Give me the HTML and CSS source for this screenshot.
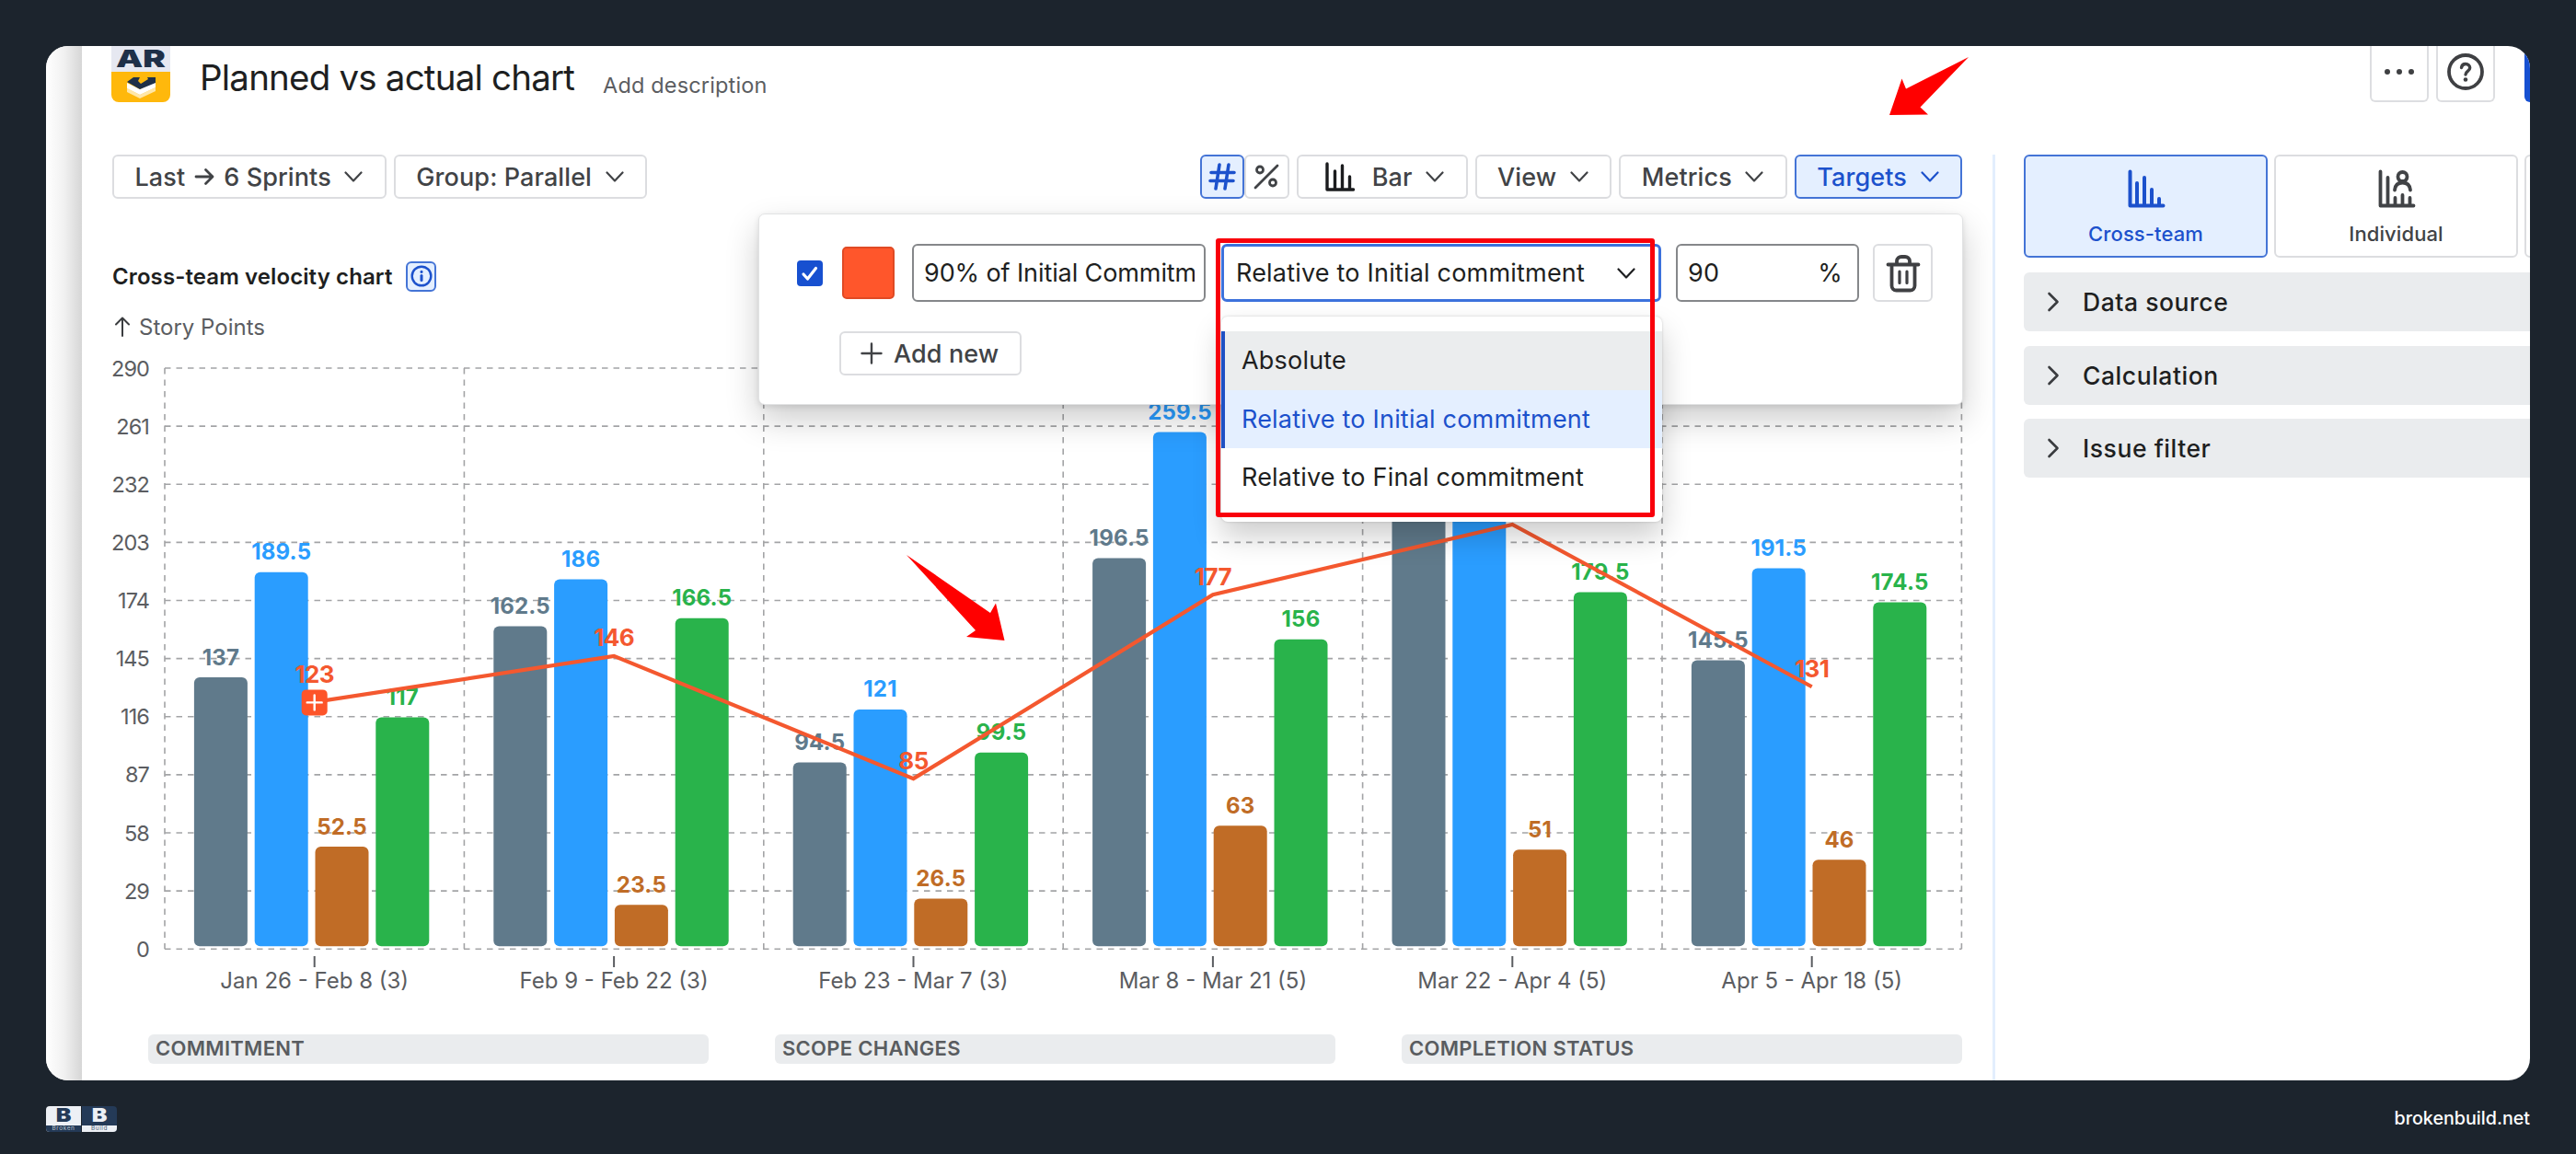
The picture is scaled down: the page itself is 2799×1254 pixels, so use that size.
FILE: index.html
```html
<!DOCTYPE html>
<html lang="en">
<head>
    <meta charset="UTF-8">
    <meta name="viewport" content="width=device-width, initial-scale=1.0">
    <title>Planned vs actual chart</title>
    <link rel="stylesheet" href="styles.css">
</head>
<body>
    <svg class="defs" width="0" height="0">
        <symbol id="chevron" viewBox="0 0 20 20"><path d="M1.5 5.5 10 14.5 18.5 5.5" fill="none" stroke="currentColor" stroke-width="2.2" stroke-linecap="round" stroke-linejoin="round"/></symbol>
        <symbol id="chevron-right" viewBox="0 0 14 22"><path d="M2.5 2 11.5 11 2.5 20" fill="none" stroke="currentColor" stroke-width="2.6" stroke-linecap="round" stroke-linejoin="round"/></symbol>
    </svg>

    <div class="window">
        <div class="edge"></div>
        <div class="app">
            <header class="header">
                <svg class="app-logo" viewBox="0 0 64 61">
                    <path d="M0 0h64v28H0z" fill="#e6e8f1"/>
                    <path d="M0 28h64v25a8 8 0 0 1-8 8H8a8 8 0 0 1-8-8z" fill="#ffb80c"/>
                    <text x="32" y="22.5" text-anchor="middle" textLength="54" lengthAdjust="spacingAndGlyphs" class="logo-text">AR</text>
                    <path d="M17 46l14 7 17-8v4L31 57 17 50z" fill="#ffe7a8"/>
                    <path d="M17 40l14 7 17-9v7L31 53 17 46z" fill="#fff"/>
                    <path d="M17 39l7-5h7l-2 4 3 3 8-5-1-2h9v6L31 47z" fill="#1f3048"/>
                </svg>
                <h1 class="title">Planned vs actual chart</h1>
                <span class="description">Add description</span>
                <div class="header-actions">
                    <button class="header-btn">
                        <svg width="32" height="8" viewBox="0 0 32 8"><circle cx="3" cy="4" r="3"/><circle cx="16" cy="4" r="3"/><circle cx="29" cy="4" r="3"/></svg>
                    </button>
                    <button class="header-btn">
                        <svg width="42" height="42" viewBox="0 0 42 42"><circle cx="21" cy="21" r="18" fill="none" stroke="currentColor" stroke-width="3.8"/><path d="M16.500 16.500c.5-3 2.300-4 4.500-4 2.800 0 4.700 1.700 4.700 4.200 0 3.600-4.700 3.800-4.700 7.300" fill="none" stroke="currentColor" stroke-width="3.4" stroke-linecap="round"/><circle cx="21" cy="29.500" r="2.300"/></svg>
                    </button>
                    <span class="save-btn"></span>
                </div>
            </header>

            <div class="columns">
                <main class="content">
                    <div class="toolbar">
                        <button class="btn">Last <svg class="arrow" viewBox="0 0 22 20"><path d="M2 10h18M12.500 2.500 20 10l-7.500 7.500"/></svg> 6 Sprints <svg class="chev"><use href="#chevron"/></svg></button>
                        <button class="btn">Group: Parallel <svg class="chev"><use href="#chevron"/></svg></button>
                        <div class="toolbar-right">
                            <div class="toggle">
                                <button class="btn icon-btn active"><svg width="30" height="30" viewBox="0 0 30 30"><path d="M12 2 8 28M22 2l-4 26M3 10.500h25M2 19.500h25" stroke-width="3.600"/></svg></button>
                                <button class="btn icon-btn"><svg width="28" height="28" viewBox="0 0 28 28"><path d="M26 2 2 26" stroke-width="2.800"/><circle cx="7" cy="6.500" r="3.500" stroke-width="2.800"/><circle cx="21" cy="20.500" r="3.500" stroke-width="2.800"/></svg></button>
                            </div>
                            <button class="btn bar-btn"><svg class="bar-icon" viewBox="0 0 32 32"><path d="M2 2v28h28.500M10.500 10v20M18.500 4v26M26.500 16v14" stroke-width="3.400"/></svg>Bar <svg class="chev"><use href="#chevron"/></svg></button>
                            <button class="btn">View <svg class="chev"><use href="#chevron"/></svg></button>
                            <button class="btn">Metrics <svg class="chev"><use href="#chevron"/></svg></button>
                            <button class="btn active">Targets <svg class="chev"><use href="#chevron"/></svg></button>
                        </div>
                    </div>

                    <div class="caption">
                        <h2>Cross-team velocity chart</h2>
                        <span class="info"><svg width="24" height="24" viewBox="0 0 24 24"><circle cx="12" cy="12" r="10.300" stroke-width="2.400"/><path d="M12 11.500v5" stroke-width="3"/><path d="M12 7.200v.2" stroke-width="3"/></svg></span>
                    </div>
                    <div class="unit"><svg width="18" height="22" viewBox="0 0 18 22"><path d="M9 21V1.500M2 8.500l7-7 7 7"/></svg>Story Points</div>

                    <svg id="chart" class="chart" viewBox="0 0 2044 729"></svg>

                    <div class="legend">
                        <div>COMMITMENT</div>
                        <div>SCOPE CHANGES</div>
                        <div>COMPLETION STATUS</div>
                    </div>

                    <section class="popover">
                        <div class="target-row">
                            <span class="checkbox"><svg width="20" height="20" viewBox="0 0 20 20"><path d="M3 11l4.500 5L16.500 4.500"/></svg></span>
                            <span class="swatch"></span>
                            <div class="field name"><span>90% of Initial Commitment</span></div>
                            <div class="select">
                                <span>Relative to Initial commitment</span>
                                <svg class="chev"><use href="#chevron"/></svg>
                                <ul class="menu">
                                    <li class="hovered">Absolute</li>
                                    <li class="selected">Relative to Initial commitment</li>
                                    <li>Relative to Final commitment</li>
                                </ul>
                            </div>
                            <div class="field value"><span>90</span><span>%</span></div>
                            <button class="trash"><svg width="38" height="42" viewBox="0 0 38 42"><path d="M2.500 11.500h33M12 11V7.500A5 5 0 0 1 17 3h4a5 5 0 0 1 5 4.500V11M6.500 12v22.500a5 5 0 0 0 5 5h15a5 5 0 0 0 5-5V12" stroke-width="3.800"/><path d="M15 19v12.500M23 19v12.500" stroke-width="3.200"/></svg></button>
                        </div>
                        <button class="btn add-btn"><svg width="24" height="24" viewBox="0 0 24 24"><path d="M12 1.500v21M1.500 12h21" stroke-width="2.400"/></svg>Add new</button>
                    </section>

                    <div class="highlight"></div>
                    <svg class="pointer pointer-targets" viewBox="0 0 86 63"><path d="M86 0 33.500 54.500 42 62.500 0 63 13.500 23.500 18 34.500z"/></svg>
                    <svg class="pointer pointer-line" viewBox="0 0 107 93"><path d="M0 0 91 63 97 52.500 106.500 93 65 89 75 82z"/></svg>
                </main>

                <aside class="panel">
                    <div class="tabs">
                        <div class="tab active"><svg width="42" height="42" viewBox="0 0 42 42"><path d="M3.500 2.500v37h36M11 15v24.500M19 9v30.500M27 22v17.500M35 32v7.500" stroke-width="4"/></svg>Cross-team</div>
                        <div class="tab"><svg width="42" height="42" viewBox="0 0 42 42"><path d="M3.500 2.500v37h36M11.500 9v30.500M19.500 31v8.500M27.500 28v11.500M35.500 31v8.500" stroke-width="3.800"/><circle cx="27.500" cy="8" r="5" stroke-width="3.800"/><path d="M19 22.500c.5-5 3.500-8 8.500-8s8 3 8.500 8" stroke-width="3.800"/></svg>Individual</div>
                        <div class="tab"></div>
                    </div>
                    <div class="accordion"><svg><use href="#chevron-right"/></svg>Data source</div>
                    <div class="accordion"><svg><use href="#chevron-right"/></svg>Calculation</div>
                    <div class="accordion"><svg><use href="#chevron-right"/></svg>Issue filter</div>
                </aside>
            </div>
        </div>
    </div>

    <footer class="footer">
        <div class="brand">
            <div class="brand-half"><b>B</b><small>Broken</small></div>
            <div class="brand-half dark"><b>B</b><small>Build</small></div>
        </div>
        <span class="site">brokenbuild.net</span>
    </footer>

    <script src="chart.js"></script>
</body>
</html>
```
FILE: styles.css
```css
* {
    box-sizing: border-box;
}
body {
    margin: 0;
    padding: 50px 50px 0;
    height: 1254px;
    overflow: hidden;
    background-color: #1c242d;
    font-family: Inter, sans-serif;
    color: #1e1f21;
}
h1, h2, ul {
    margin: 0;
    padding: 0;
}
button {
    font-family: inherit;
    margin: 0;
}
.defs {
    position: absolute;
}
svg path, svg circle {
    stroke-linecap: round;
    stroke-linejoin: round;
}
.window {
    display: flex;
    height: 1124px;
    border-radius: 24px;
    background-color: #fff;
    overflow: hidden;
}
.edge {
    flex: none;
    width: 39px;
    background: linear-gradient(to right, #fff, #f1f1f1 50%, #d6d6d6);
}
.app {
    flex: 1;
    min-width: 0;
}

/* header */
.header {
    display: flex;
    align-items: flex-start;
    height: 118px;
    padding-left: 32px;
}
.app-logo {
    width: 64px;
    height: 61px;
}
.logo-text {
    font-size: 26px;
    font-weight: 900;
    fill: #1f3048;
}
.title {
    margin-left: 32px;
    font-size: 38.5px;
    font-weight: 400;
    line-height: 69px;
    letter-spacing: -0.8px;
    white-space: nowrap;
}
.description {
    margin-left: 31px;
    font-size: 23.5px;
    line-height: 85px;
    letter-spacing: 0.15px;
    color: #5b5d61;
}
.header-actions {
    display: flex;
    margin-left: auto;
}
.header-btn {
    display: flex;
    align-items: center;
    justify-content: center;
    width: 64px;
    height: 61px;
    margin-right: 8px;
    padding: 0 0 3px;
    border: 2px solid #dddee1;
    border-top: none;
    border-radius: 0 0 6px 6px;
    background: #fff;
    color: #3f4043;
    fill: currentColor;
}
.save-btn {
    width: 6px;
    height: 61px;
    margin-left: 24px;
    border-bottom-left-radius: 6px;
    background-color: #1650d2;
}

.columns {
    display: flex;
    padding-left: 33px;
}
.content {
    position: relative;
    flex: none;
    width: 2010px;
}

/* toolbar */
.toolbar {
    display: flex;
    gap: 8px;
}
.toolbar-right {
    display: flex;
    gap: 8px;
    margin-left: auto;
}
.toggle {
    display: flex;
    gap: 0;
}
.btn {
    display: flex;
    align-items: center;
    height: 48px;
    padding: 0 23.5px 0 22.5px;
    border: 2px solid #dcdde0;
    border-radius: 6px;
    background-color: #fff;
    font-size: 27px;
    font-weight: 500;
    letter-spacing: 0.1px;
    white-space: nowrap;
    color: #414346;
}
.btn.active {
    border-color: #4474d6;
    background-color: #e4efff;
    color: #1c51cc;
}
.btn path, .btn circle {
    fill: none;
    stroke: currentColor;
}
.icon-btn {
    justify-content: center;
    width: 48.5px;
    padding: 0;
}
.chev {
    flex: none;
    width: 20px;
    height: 20px;
    margin-left: 14.5px;
}
.arrow {
    width: 22px;
    height: 20px;
    margin: 0 10px;
    stroke-width: 2.8;
}
.bar-btn {
    padding-left: 29px;
}
.bar-icon {
    width: 32px;
    height: 32px;
    margin-right: 19px;
    color: #1b1c1e;
}

/* chart */
.caption {
    display: flex;
    align-items: center;
    gap: 15px;
    height: 32px;
    margin-top: 68px;
}
.caption h2 {
    font-size: 24px;
    font-weight: 600;
    letter-spacing: 0.1px;
}
.info {
    display: flex;
    align-items: center;
    justify-content: center;
    width: 33px;
    height: 33px;
    border: 2px solid #4474d6;
    border-radius: 6px;
    background-color: #e4efff;
}
.info path, .info circle {
    fill: none;
    stroke: #1c51cc;
}
.unit {
    display: flex;
    align-items: center;
    gap: 9px;
    height: 30px;
    margin-top: 24px;
    padding-left: 2px;
    font-size: 24px;
    color: #5b5d61;
}
.unit path {
    fill: none;
    stroke: #3a3c3f;
    stroke-width: 2;
}
.chart {
    display: block;
    width: 2044px;
    height: 729px;
}
.grid {
    stroke: #a3a4a6;
    stroke-width: 1.6;
    stroke-dasharray: 6.5 6;
}
.tick {
    stroke: #5b5d61;
    stroke-width: 2;
}
.axis {
    font-size: 23.500px;
    fill: #5b5d61;
}
.axis-x {
    font-size: 24px;
    text-anchor: middle;
}
.axis-y {
    text-anchor: end;
    letter-spacing: -0.9px;
}
.bar-label {
    font-size: 24px;
    font-weight: 650;
    text-anchor: middle;
    letter-spacing: 0.2px;
}
.commitment { fill: #607a8b; }
.final { fill: #2a9dff; }
.changes { fill: #c06c26; }
.completed { fill: #29b34b; }
.target-line {
    fill: none;
    stroke: #f4582f;
    stroke-width: 4.2;
}
.target-label {
    font-size: 26px;
    font-weight: 700;
    letter-spacing: -0.6px;
    text-anchor: middle;
    fill: #f4582f;
}
.legend {
    display: grid;
    grid-template-columns: repeat(3, 1fr);
    gap: 72px;
    margin-top: 25px;
    padding-left: 39px;
}
.legend div {
    height: 32px;
    padding-left: 8px;
    border-radius: 6px;
    background-color: #eaecee;
    font-size: 22px;
    font-weight: 600;
    line-height: 31px;
    letter-spacing: 0.3px;
    color: #595c60;
}

/* targets popover */
.popover {
    position: absolute;
    top: 64px;
    left: 702px;
    width: 1309px;
    height: 208px;
    padding: 32px 32px 0 41px;
    border: 1px solid #e2e3e4;
    border-radius: 7px;
    background-color: #fff;
    box-shadow: 0 16px 36px rgba(0, 0, 0, 0.2), 0 2px 6px rgba(0, 0, 0, 0.1);
}
.target-row {
    display: flex;
    align-items: center;
    height: 63px;
    font-size: 27px;
    letter-spacing: 0.2px;
}
.checkbox {
    display: flex;
    align-items: center;
    justify-content: center;
    width: 28px;
    height: 28px;
    border-radius: 4px;
    background-color: #1750d0;
}
.checkbox path {
    fill: none;
    stroke: #fff;
    stroke-width: 3.2;
}
.swatch {
    width: 57px;
    height: 57px;
    margin: 0 19px 0 21px;
    border: 2px solid #e04a24;
    border-radius: 5px;
    background-color: #ff562b;
}
.field {
    display: flex;
    align-items: center;
    height: 63px;
    border: 2px solid #85878a;
    border-radius: 6px;
}
.name {
    width: 319px;
    padding: 0 10px 0 11px;
    letter-spacing: -0.1px;
}
.name span {
    overflow: hidden;
    white-space: nowrap;
}
.select {
    position: relative;
    display: flex;
    align-items: center;
    justify-content: space-between;
    width: 478px;
    height: 63px;
    margin: 0 16px 0 17px;
    padding: 0 25px 0 13px;
    border: 3px solid #3c71dc;
    border-radius: 6px;
}
.menu {
    position: absolute;
    top: 76px;
    left: -3px;
    width: 479px;
    padding: 16px 0;
    border-radius: 7px;
    background-color: #fff;
    box-shadow: 0 16px 32px rgba(0, 0, 0, 0.2), 0 0 3px rgba(0, 0, 0, 0.18);
    list-style: none;
}
.menu li {
    height: 63.700px;
    padding-left: 22px;
    line-height: 63px;
}
.menu .hovered {
    padding-left: 18px;
    border-left: 4px solid #1f50c4;
    background-color: #ebedee;
}
.menu .selected {
    padding-left: 18px;
    border-left: 4px solid #1f50c4;
    background-color: #e4efff;
    color: #1c51cc;
}
.value {
    justify-content: space-between;
    width: 199px;
    padding: 0 16px 0 11px;
}
.trash {
    display: flex;
    align-items: center;
    justify-content: center;
    width: 65px;
    height: 63px;
    margin-left: 15px;
    padding: 0;
    border: 2px solid #dcdde0;
    border-radius: 6px;
    background: #fff;
}
.trash path {
    fill: none;
    stroke: #3f4043;
}
.add-btn {
    gap: 12px;
    width: 198px;
    margin: 32px 0 0 46px;
    padding: 0 0 0 21px;
}

/* red annotations */
.highlight {
    position: absolute;
    top: 91px;
    left: 1199px;
    width: 477px;
    height: 303px;
    border: 5px solid #f9000b;
    border-radius: 3px;
}
.pointer {
    position: absolute;
    fill: #f00;
}
.pointer-targets {
    top: -106px;
    left: 1931px;
    width: 86px;
    height: 63px;
}
.pointer-line {
    top: 435px;
    left: 863px;
    width: 107px;
    height: 93px;
}

/* side panel */
.panel {
    flex: none;
    width: 584px;
    height: 1006px;
    margin-left: 33px;
    padding-left: 31px;
    border-left: 3px solid #e3eefd;
}
.tabs {
    display: flex;
    gap: 7px;
    margin-bottom: 16px;
}
.tab {
    flex: none;
    display: flex;
    flex-direction: column;
    align-items: center;
    gap: 14px;
    width: 265px;
    height: 112px;
    padding-top: 14px;
    border: 2px solid #dcdde0;
    border-radius: 6px;
    font-size: 22px;
    font-weight: 500;
    line-height: 28px;
    letter-spacing: 0.1px;
    color: #414346;
}
.tab path, .tab circle {
    fill: none;
    stroke: currentColor;
}
.tab.active {
    border-color: #4474d6;
    background-color: #e4efff;
    color: #1c51cc;
}
.accordion {
    display: flex;
    align-items: center;
    gap: 25px;
    height: 64px;
    margin-bottom: 15.500px;
    padding-left: 25px;
    border-radius: 6px 0 0 6px;
    background-color: #eaecee;
    font-size: 26.500px;
    font-weight: 500;
    letter-spacing: 0.55px;
}
.accordion svg {
    width: 14px;
    height: 22px;
    color: #3a3c3f;
}

/* footer */
.footer {
    display: flex;
    justify-content: space-between;
    padding-top: 28px;
}
.brand {
    display: flex;
    width: 77px;
    height: 28px;
    border-radius: 4px;
    overflow: hidden;
}
.brand-half {
    flex: 1;
    display: flex;
    flex-direction: column;
    background-color: #edf0f5;
    color: #243a57;
    text-align: center;
}
.brand-half b {
    height: 21px;
    font-size: 20px;
    font-weight: 900;
    line-height: 21px;
    transform: scaleX(1.25);
}
.brand-half small {
    height: 7px;
    background-color: #243a57;
    font-size: 6.500px;
    line-height: 7px;
    letter-spacing: 0.6px;
    color: #b9c3d0;
}
.brand-half.dark {
    border-left: 1px solid #1c242d;
    background-color: #243a57;
    color: #edf0f5;
}
.brand-half.dark small {
    background-color: #edf0f5;
    color: #4b5d75;
}
.site {
    font-size: 19.700px;
    font-weight: 500;
    line-height: 26px;
    color: #fff;
}
```
FILE: chart.js
```javascript
const sprints = [
    { name: 'Jan 26 - Feb 8 (3)', values: [137, 189.5, 52.5, 117], target: 123.3 },
    { name: 'Feb 9 - Feb 22 (3)', values: [162.5, 186, 23.5, 166.5], target: 146.25 },
    { name: 'Feb 23 - Mar 7 (3)', values: [94.5, 121, 26.5, 99.5], target: 85.05 },
    { name: 'Mar 8 - Mar 21 (5)', values: [196.5, 259.5, 63, 156], target: 176.85 },
    { name: 'Mar 22 - Apr 4 (5)', values: [235.5, 250, 51, 179.5], target: 211.95 },
    { name: 'Apr 5 - Apr 18 (5)', values: [145.5, 191.5, 46, 174.5], target: 130.95 }
];
const series = ['commitment', 'final', 'changes', 'completed'];

const left = 57;
const top0 = 30;
const height = 631.3;
const step = 325.4;
const max = 290;
const y = v => top0 + height - v / max * height;
const right = left + step * sprints.length;
const menuBottom = 198; // labels above this line are under the open menu

let grid = '';
for (let v = 0; v <= max; v += 29) {
    grid += `<line class="grid" x1="${left}" x2="${right}" y1="${y(v)}" y2="${y(v)}"/>`;
    grid += `<text class="axis axis-y" x="40" y="${y(v) + 8.5}">${v}</text>`;
}
for (let i = 0; i <= sprints.length; i++) {
    const x = left + step * i;
    grid += `<line class="grid" x1="${x}" x2="${x}" y1="${top0}" y2="${y(0)}"/>`;
}

let bars = '';
let labels = '';
const points = [];
sprints.forEach((sprint, i) => {
    const cx = left + step * (i + 0.5);
    sprint.values.forEach((v, j) => {
        const x = cx - 130.8 + j * 65.8;
        const t = y(v) + 3;
        bars += `<rect class="${series[j]}" x="${x}" y="${t}" width="58" height="${y(0) - 3 - t}" rx="6"/>`;
        if (i !== 4 || t > menuBottom) {
            bars += `<text class="bar-label ${series[j]}" x="${x + 29}" y="${t - 13.5}">${v}</text>`;
        }
    });
    bars += `<line class="tick" x1="${cx}" x2="${cx}" y1="669" y2="681"/>`;
    bars += `<text class="axis axis-x" x="${cx}" y="703.5">${sprint.name}</text>`;

    const ty = y(sprint.target);
    points.push(`${cx},${ty}`);
    if (ty > menuBottom + 10) {
        labels += `<text class="target-label" x="${cx}" y="${ty - (i === 0 ? 21 : 10.5)}">${Math.round(sprint.target)}</text>`;
    }
});

// first point of the target line carries the "+" marker
const mx = left + step / 2;
const my = y(sprints[0].target);
const marker = `<rect x="${mx - 14}" y="${my - 13.5}" width="28" height="28" rx="5" fill="#fd5429"/>
    <path d="M${mx} ${my - 7.5}v16M${mx - 8} ${my + 0.5}h16" stroke="#fff" stroke-width="2.4"/>`;

document.getElementById('chart').innerHTML =
    grid + bars + `<polyline class="target-line" points="${points.join(' ')}"/>` + labels + marker;
```
